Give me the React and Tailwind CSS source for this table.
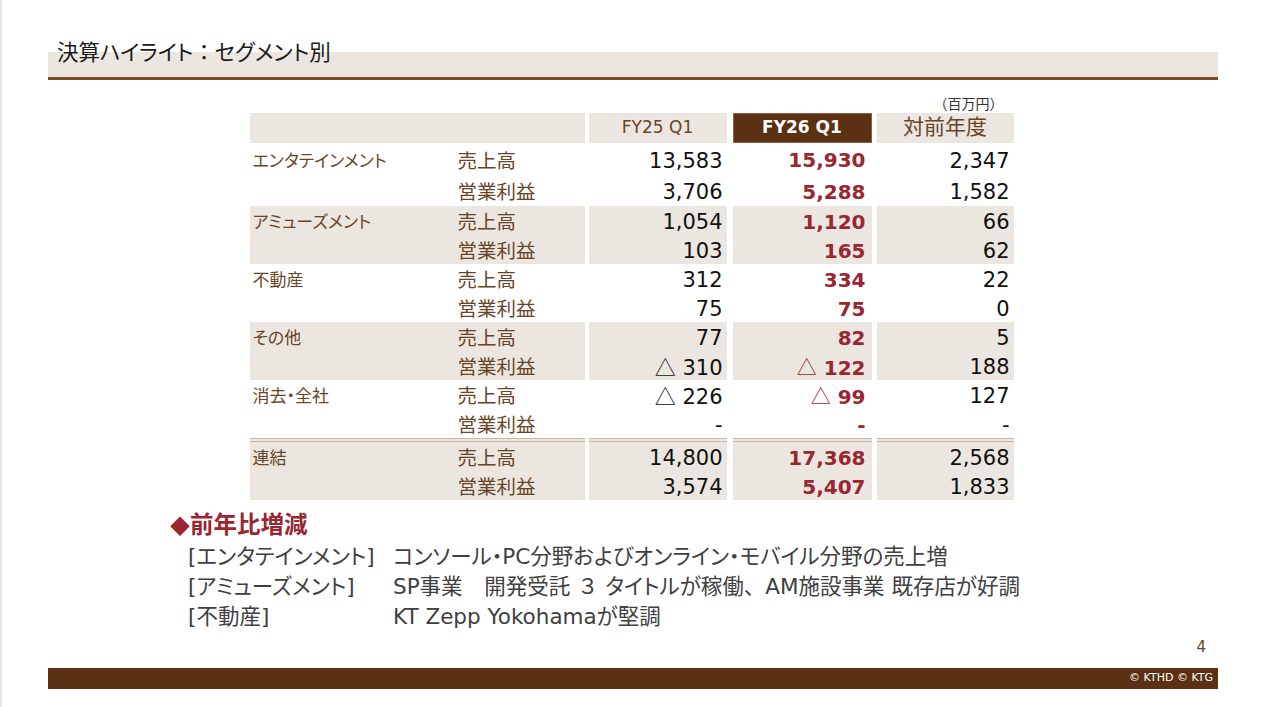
const groups = [
  {
    seg: "エンタテインメント",
    shade: false,
    tall: true,
    items: [
      ["売上高", "13,583", "15,930", "2,347"],
      ["営業利益", "3,706", "5,288", "1,582"],
    ],
  },
  {
    seg: "アミューズメント",
    shade: true,
    items: [
      ["売上高", "1,054", "1,120", "66"],
      ["営業利益", "103", "165", "62"],
    ],
  },
  {
    seg: "不動産",
    shade: false,
    items: [
      ["売上高", "312", "334", "22"],
      ["営業利益", "75", "75", "0"],
    ],
  },
  {
    seg: "その他",
    shade: true,
    items: [
      ["売上高", "77", "82", "5"],
      ["営業利益", "△ 310", "△ 122", "188"],
    ],
  },
  {
    seg: "消去・全社",
    shade: false,
    items: [
      ["売上高", "△ 226", "△ 99", "127"],
      ["営業利益", "-", "-", "-"],
    ],
  },
  {
    seg: "連結",
    shade: true,
    total: true,
    items: [
      ["売上高", "14,800", "17,368", "2,568"],
      ["営業利益", "3,574", "5,407", "1,833"],
    ],
  },
];

const font = "font-['DejaVu_Sans','Noto_Sans_CJK_JP',sans-serif] [font-feature-settings:'palt']";
const full = "[font-feature-settings:normal]";

// △ comes from the CJK face, digits from the Verdana-like face
const Value = ({ v }) => (
  <span className="whitespace-pre">
    {v.startsWith("△") ? (
      <>
        <span className="font-['Noto_Sans_CJK_JP',sans-serif] font-normal">△</span>
        {v.slice(1)}
      </>
    ) : (
      v
    )}
  </span>
);

const Cell = ({ group, width, children }) => (
  <div
    className={`${width} ${group.shade ? "bg-[#ebe6e0]" : ""} ${
      group.total ? "border-t-4 border-double border-[#ccb6a6]" : ""
    }`}
  >
    {children}
  </div>
);

const Group = ({ group }) => {
  const rowH = group.tall ? "h-[31.5px]" : "h-[29px]";
  return (
    <div className="flex">
      <Cell group={group} width="w-[335px]">
        {group.items.map((item, i) => (
          <div key={item[0]} className={`flex items-center pt-[5px] ${rowH}`}>
            <span className="w-[208px] pl-[3px] text-[17px] text-[#6a4426]">{i === 0 ? group.seg : ""}</span>
            <span className="text-[19.5px] text-[#6a4426]">{item[0]}</span>
          </div>
        ))}
      </Cell>
      <Cell group={group} width="ml-[4px] w-[138px]">
        {group.items.map((item) => (
          <div key={item[0]} className={`flex items-center justify-end pt-[5px] pr-[4px] text-[21px] text-[#111] ${rowH}`}>
            <Value v={item[1]} />
          </div>
        ))}
      </Cell>
      <Cell group={group} width="ml-[6px] w-[139px]">
        {group.items.map((item) => (
          <div
            key={item[0]}
            className={`flex items-center justify-end pt-[3px] pr-[6px] text-[20px] font-bold text-[#992631] ${rowH}`}
          >
            <Value v={item[2]} />
          </div>
        ))}
      </Cell>
      <Cell group={group} width="ml-[5px] w-[137px]">
        {group.items.map((item) => (
          <div key={item[0]} className={`flex items-center justify-end pt-[5px] pr-[4px] text-[21px] text-[#111] ${rowH}`}>
            <Value v={item[3]} />
          </div>
        ))}
      </Cell>
    </div>
  );
};

export default function App() {
  return (
    <div className={`flex h-[707px] w-[1263px] flex-col bg-white shadow-[inset_2px_0_0_#e4e4e4] ${font}`}>
      <div className="mt-[38px] ml-[48px] mr-[45px]">
        <div className="h-[39px] bg-[linear-gradient(to_bottom,transparent_14px,#ebe6e0_14px)] pl-[9px] text-[21.5px] leading-[30px] text-[#1a1a1a]">
          決算ハイライト<span className={full}>：</span>セグメント別
        </div>
        <div className="h-[3px] bg-[#7a4a20]" />
      </div>

      <div className="mx-auto mt-[15px] w-[764px]">
        <div className={`flex h-[18px] items-center justify-end pr-[10px] text-[14px] text-[#333] ${full}`}>
          （百万円）
        </div>
        <div className="flex h-[30px]">
          <div className="w-[335px] bg-[#ebe6e0]" />
          <div className="ml-[4px] flex w-[138px] items-center justify-center bg-[#ebe6e0] text-[17px] text-[#6a4426]">
            FY25 Q1
          </div>
          <div className="ml-[6px] flex w-[139px] items-center justify-center border border-[#8a6248] bg-[#5c3013] text-[17px] font-bold text-white">
            FY26 Q1
          </div>
          <div className="ml-[5px] flex w-[137px] items-center justify-center bg-[#ebe6e0] text-[21px] text-[#6a4426]">
            対前年度
          </div>
        </div>
        {groups.map((g) => (
          <Group key={g.seg} group={g} />
        ))}
      </div>

      <div className="mt-[10px] pl-[170px]">
        <div className="flex h-[32px] items-center text-[23.5px] font-bold text-[#992631]">
          <span className="font-['Noto_Sans_CJK_JP',sans-serif] text-[20px]">◆</span>前年比増減
        </div>
        <div className="grid grid-cols-[205px_1fr] pl-[18px] text-[21.5px] leading-[30px] text-[#404040]">
          <span>[エンタテインメント]</span>
          <span>コンソール・PC分野およびオンライン・モバイル分野の売上増</span>
          <span>[アミューズメント]</span>
          <span>
            SP事業<span className={full}>　</span>開発受託<span className={full}> ３ </span>タイトルが稼働
            <span className={full}>、</span>AM施設事業 既存店が好調
          </span>
          <span>[不動産]</span>
          <span>KT Zepp Yokohamaが堅調</span>
        </div>
      </div>

      <div className="mt-auto flex justify-end pr-[57px] text-[15px] leading-[20px] text-[#6a4426]">4</div>
      <div className="mt-[11px] mb-[18px] ml-[48px] mr-[45px] flex h-[21px] items-center justify-end bg-[#5c3013] pr-[5px] text-[11px] text-white">
        © KTHD © KTG
      </div>
    </div>
  );
}
